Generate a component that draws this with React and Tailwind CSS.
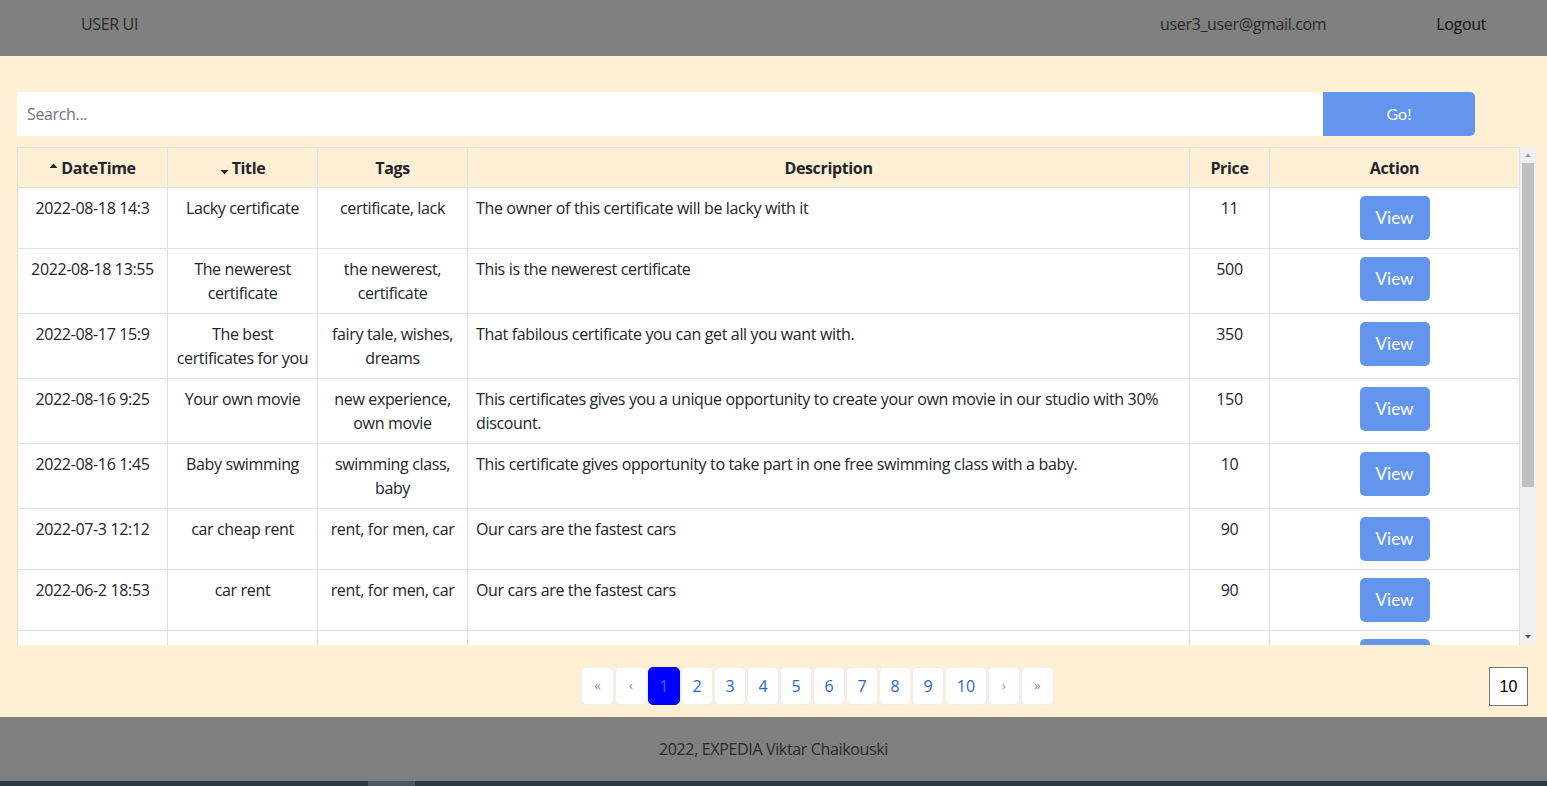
import React from "react";

const rows = [
  {
    date: "2022-08-18 14:3",
    title: "Lacky certificate",
    tags: "certificate, lack",
    desc: "The owner of this certificate will be lacky with it",
    price: 11,
  },
  {
    date: "2022-08-18 13:55",
    title: "The newerest certificate",
    tags: "the newerest, certificate",
    desc: "This is the newerest certificate",
    price: 500,
  },
  {
    date: "2022-08-17 15:9",
    title: "The best certificates for you",
    tags: "fairy tale, wishes, dreams",
    desc: "That fabilous certificate you can get all you want with.",
    price: 350,
  },
  {
    date: "2022-08-16 9:25",
    title: "Your own movie",
    tags: "new experience, own movie",
    desc: "This certificates gives you a unique opportunity to create your own movie in our studio with 30% discount.",
    price: 150,
  },
  {
    date: "2022-08-16 1:45",
    title: "Baby swimming",
    tags: "swimming class, baby",
    desc: "This certificate gives opportunity to take part in one free swimming class with a baby.",
    price: 10,
  },
  {
    date: "2022-07-3 12:12",
    title: "car cheap rent",
    tags: "rent, for men, car",
    desc: "Our cars are the fastest cars",
    price: 90,
  },
  {
    date: "2022-06-2 18:53",
    title: "car rent",
    tags: "rent, for men, car",
    desc: "Our cars are the fastest cars",
    price: 90,
  },
  {
    date: "2022-06-1 10:10",
    title: "Fly fishing",
    tags: "fishing, relax",
    desc: "This certificate allows you to go to the fishing trip in the world",
    price: 75,
  },
];

const pages = ["«", "‹", "1", "2", "3", "4", "5", "6", "7", "8", "9", "10", "›", "»"];

// little sort arrows in the header
const Caret = ({ up }) => (
  <svg
    width="9"
    height="5"
    viewBox="0 0 9 5"
    className={"inline-block mr-[3px] relative " + (up ? "-top-[4px]" : "top-[3px]")}
  >
    {up ? <path d="M0.5 5 L4.5 0.5 L8.5 5 Z" fill="#212529" /> : <path d="M0.5 0 L4.5 4.5 L8.5 0 Z" fill="#212529" />}
  </svg>
);

const th = "h-[40px] border border-[#dee2e6] px-2 py-0 font-bold text-center leading-6";
const td = "border border-[#dee2e6] px-2 py-2 align-top leading-6";

const App = () => {
  return (
    <div
      className="w-[1547px] h-[786px] flex flex-col text-[16px] text-[#212529] tracking-[-0.35px] overflow-hidden"
      style={{ fontFamily: "'Open Sans', 'Noto Sans', sans-serif" }}
    >
      <header className="h-[56px] shrink-0 bg-[#808080] flex items-start pt-[12px] text-[#2b2b2b] leading-6">
        <span className="ml-[81px]">USER UI</span>
        <span className="ml-auto">user3_user@gmail.com</span>
        <span className="ml-[110px] mr-[61px] text-[#111]">Logout</span>
      </header>

      <main className="flex-1 bg-[#ffefd5] pl-[17px] pt-[36px] flex flex-col">
        <div className="flex w-[1458px] h-[44px]">
          <input
            className="flex-1 bg-white px-[10px] outline-none placeholder:text-[#6c757d]"
            placeholder="Search..."
          />
          <button
            className="w-[152px] bg-[#6495ed] text-white rounded-r-[5px] tracking-normal"
            style={{ fontFamily: "Lato, sans-serif" }}
          >
            Go!
          </button>
        </div>

        <div className="flex mt-[11px] h-[498px] w-[1519px]">
          <div className="flex-1 overflow-hidden bg-white">
            <table className="border-collapse table-fixed w-[1502px]">
              <colgroup>
                <col className="w-[150px]" />
                <col className="w-[150px]" />
                <col className="w-[150px]" />
                <col className="w-[722px]" />
                <col className="w-[80px]" />
                <col className="w-[250px]" />
              </colgroup>
              <thead className="bg-[#ffefd5]">
                <tr>
                  <th className={th}>
                    <Caret up />
                    DateTime
                  </th>
                  <th className={th}>
                    <Caret />
                    Title
                  </th>
                  <th className={th}>Tags</th>
                  <th className={th}>Description</th>
                  <th className={th}>Price</th>
                  <th className={th}>Action</th>
                </tr>
              </thead>
              <tbody>
                {rows.map((r, i) => (
                  <tr key={i}>
                    <td className={td + " text-center"}>{r.date}</td>
                    <td className={td + " text-center"}>{r.title}</td>
                    <td className={td + " text-center"}>{r.tags}</td>
                    <td className={td}>{r.desc}</td>
                    <td className={td + " text-center"}>{r.price}</td>
                    <td className={td + " text-center"}>
                      <button
                        className="w-[70px] h-[44px] bg-[#6495ed] text-white rounded-[5px] text-[17px] tracking-normal"
                        style={{ fontFamily: "Lato, sans-serif" }}
                      >
                        View
                      </button>
                    </td>
                  </tr>
                ))}
              </tbody>
            </table>
          </div>
          <div className="w-[16px] shrink-0 bg-[#f1f1f1] flex flex-col items-center">
            <svg width="8" height="16" viewBox="0 0 8 16" className="shrink-0">
              <path d="M1 10 L4 6.5 L7 10 Z" fill="#a3a3a3" />
            </svg>
            <div className="w-[12px] h-[324px] bg-[#c1c1c1]" />
            <div className="flex-1" />
            <svg width="8" height="16" viewBox="0 0 8 16" className="shrink-0">
              <path d="M1 6 L4 9.5 L7 6 Z" fill="#505050" />
            </svg>
          </div>
        </div>

        <div className="flex items-start mt-[22px]">
          <nav className="flex gap-[1px] ml-[564px] tracking-normal">
            {pages.map((p, i) => {
              const active = p === "1";
              const arrow = i < 2 || i > 11;
              return (
                <span
                  key={i}
                  className={
                    "h-[38px] flex items-center justify-center rounded-[5px] border " +
                    (p === "10" ? "w-[42px] " : i === 0 || i === 13 ? "w-[33px] " : "w-[32px] ") +
                    (active
                      ? "bg-[#0000ff] border-[#0000ff] text-[#3b6bff]"
                      : "bg-white border-[#eeeeee] " + (arrow ? "text-[#8a8f94] text-[13px]" : "text-[#2b63d6]"))
                  }
                >
                  {p}
                </span>
              );
            })}
          </nav>
          <div
            className="ml-auto mr-[19px] w-[39px] h-[39px] bg-white border border-[#767676] flex items-center justify-center text-[16px] text-black tracking-normal"
            style={{ fontFamily: "'Liberation Sans', Arial, sans-serif" }}
          >
            10
          </div>
        </div>
      </main>

      <footer className="h-[64px] shrink-0 bg-[#808080] flex items-start justify-center pt-[20px] leading-6 text-[#2b2b2b]">
        2022, EXPEDIA Viktar Chaikouski
      </footer>
      <div className="h-[5px] shrink-0 bg-[#2a3a44] flex">
        <div className="ml-[368px] w-[47px] bg-[#4a5862]" />
      </div>
    </div>
  );
};

export default App;
